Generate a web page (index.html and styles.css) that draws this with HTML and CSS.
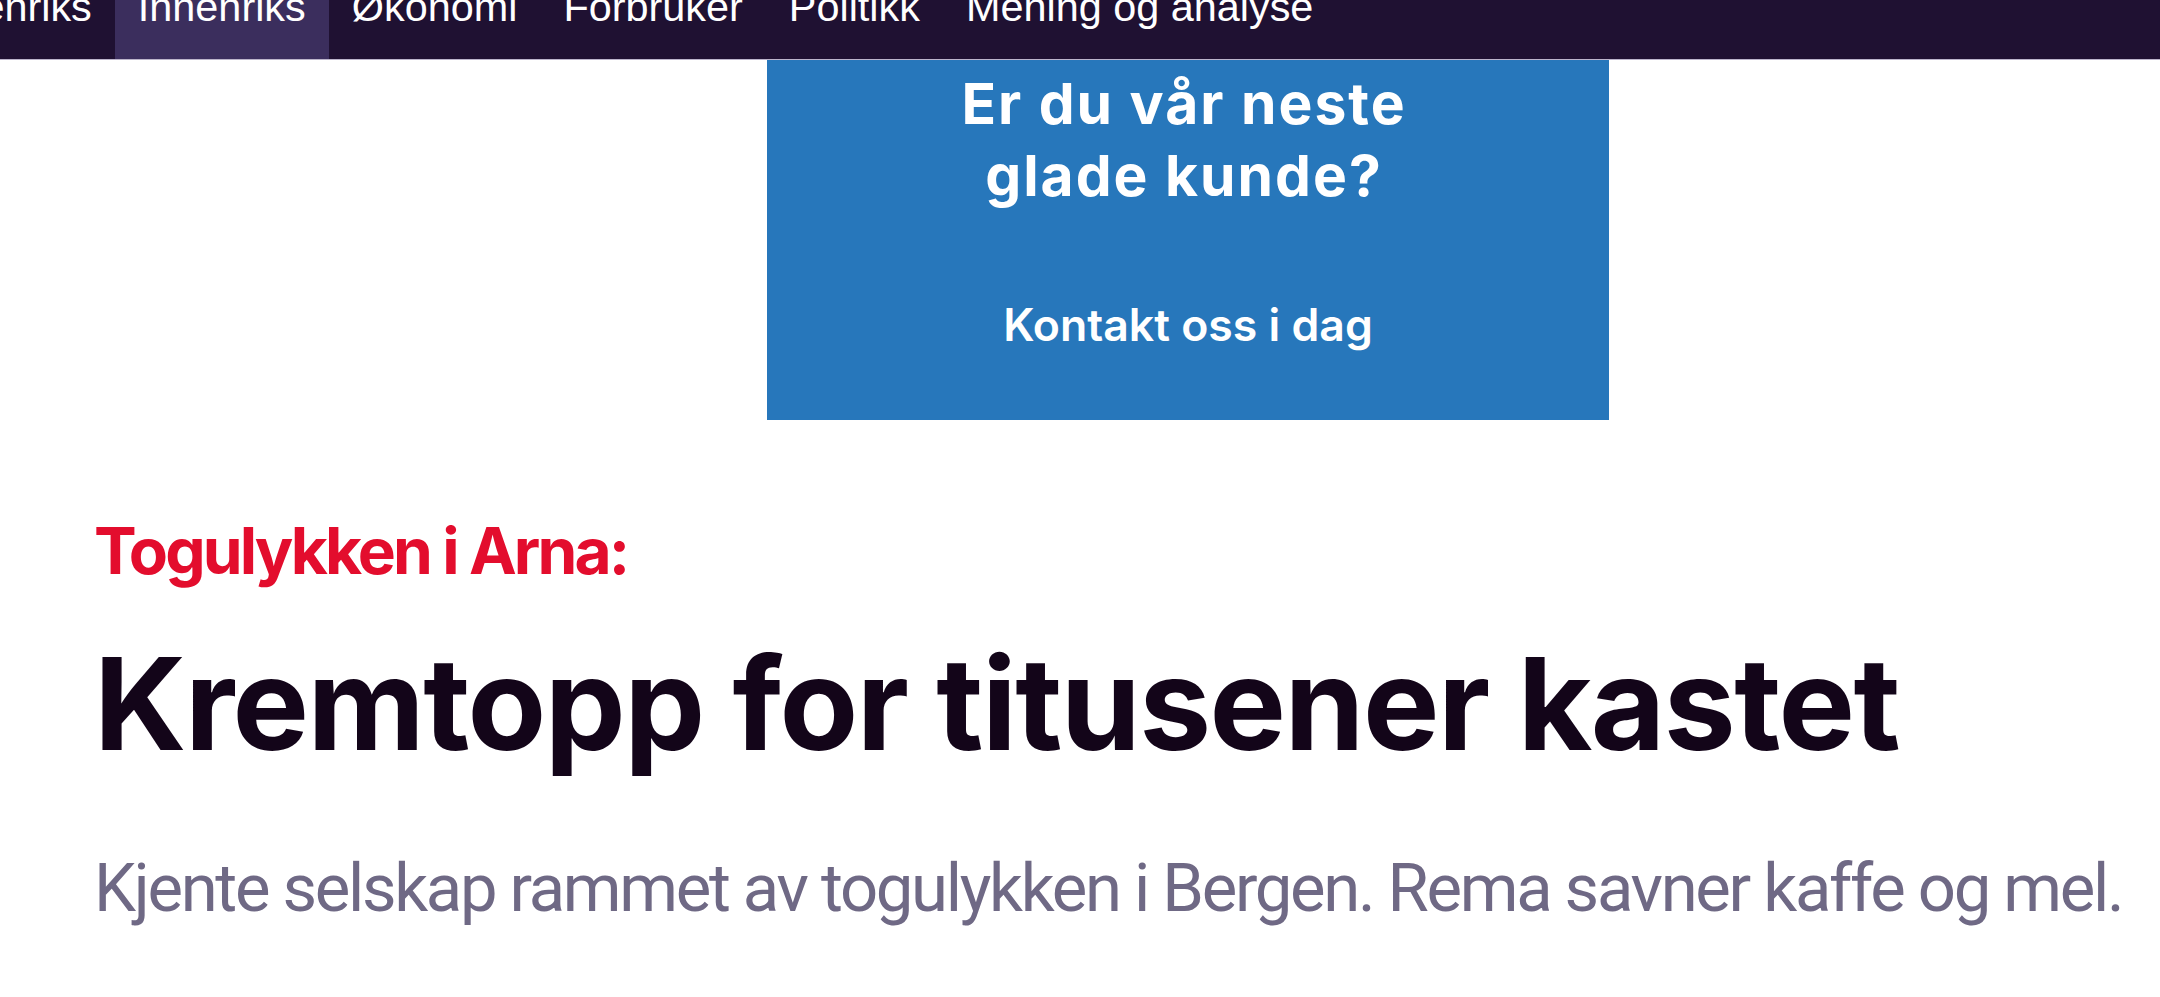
FILE: index.html
```html
<!DOCTYPE html>
<html lang="no">
<head>
<meta charset="utf-8">
<title>Kremtopp for titusener kastet</title>
<link rel="stylesheet" href="styles.css">
</head>
<body>
<header class="topnav">
  <ul class="nav-list">
    <li class="nav-item">Utenriks</li>
    <li class="nav-item active">Innenriks</li>
    <li class="nav-item">Økonomi</li>
    <li class="nav-item">Forbruker</li>
    <li class="nav-item">Politikk</li>
    <li class="nav-item">Mening og analyse</li>
  </ul>
</header>
<div class="ad">
  <h2 class="ad-title">Er du vår neste<br>glade kunde?</h2>
  <p class="ad-cta">Kontakt oss i dag</p>
</div>
<main class="article">
  <p class="kicker">Togulykken i Arna:</p>
  <h1 class="headline">Kremtopp for titusener kastet</h1>
  <p class="lead">Kjente selskap rammet av togulykken i Bergen. Rema savner kaffe og mel.</p>
</main>
</body>
</html>
```
FILE: styles.css
```css
html, body {
  margin: 0;
  padding: 0;
  background: #ffffff;
}
body {
  font-family: Inter, "Noto Sans", sans-serif;
  overflow: hidden;
}
.topnav {
  background: #1f1132;
  height: 60px;
  overflow: hidden;
  border-bottom: 1px solid #bcb5cb;
  box-sizing: border-box;
}
.nav-list {
  display: flex;
  list-style: none;
  margin: -16px 0 0 -83px;
  padding: 0;
  height: 76px;
}
.nav-item {
  font-family: "Liberation Sans", Arial, sans-serif;
  font-size: 41.4px;
  line-height: normal;
  color: #ffffff;
  padding: 0 23px;
  white-space: nowrap;
}
.nav-item.active {
  background: #3b2e5d;
}
.ad {
  width: 842px;
  height: 360px;
  margin-left: 767px;
  background: #2777bb;
  color: #ffffff;
  text-align: center;
  box-sizing: border-box;
  padding-top: 8px;
}
.ad-title {
  margin: 0;
  padding-right: 8px;
  font-size: 57px;
  font-weight: 700;
  line-height: 72px;
  letter-spacing: 0.035em;
}
.ad-cta {
  margin: 86px 0 0;
  font-size: 44.6px;
  font-weight: 600;
  line-height: 54px;
}
.article {
  padding-left: 94px;
}
.kicker {
  margin: 93px 0 0;
  color: #e30d2d;
  font-size: 64px;
  font-weight: 700;
  line-height: 76px;
  letter-spacing: -0.045em;
}
.headline {
  margin: 40px 0 0;
  color: #130519;
  font-size: 128.5px;
  font-weight: 700;
  line-height: 150px;
  letter-spacing: -0.012em;
}
.lead {
  margin: 67px 0 0;
  color: #6f6985;
  font-family: Roboto, "Liberation Sans", sans-serif;
  font-size: 67px;
  font-weight: 400;
  line-height: 84px;
  letter-spacing: -0.0345em;
  white-space: nowrap;
}
```
